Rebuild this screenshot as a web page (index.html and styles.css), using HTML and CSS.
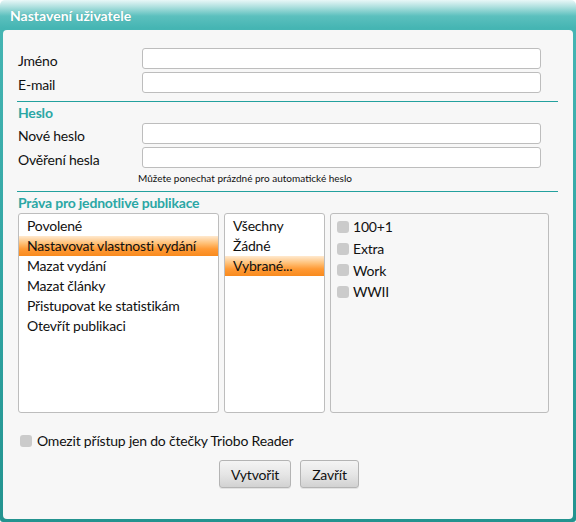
FILE: index.html
```html
<!DOCTYPE html>
<html lang="cs">
<head>
<meta charset="utf-8">
<title>Nastavení uživatele</title>
<link rel="stylesheet" href="styles.css">
</head>
<body>
<div class="dialog">
  <div class="titlebar">Nastavení uživatele</div>
  <div class="panel">
    <div class="form-grid">
      <label class="lbl">Jméno</label><div class="input"></div>
      <label class="lbl">E-mail</label><div class="input"></div>
    </div>
    <div class="section">
      <div class="heading">Heslo</div>
    </div>
    <div class="form-grid">
      <label class="lbl">Nové heslo</label><div class="input"></div>
      <label class="lbl">Ověření hesla</label><div class="input"></div>
    </div>
    <div class="hint">Můžete ponechat prázdné pro automatické heslo</div>
    <div class="section">
      <div class="heading">Práva pro jednotlivé publikace</div>
    </div>
    <div class="lists">
      <ul class="list list-perms">
        <li>Povolené</li>
        <li class="sel">Nastavovat vlastnosti vydání</li>
        <li>Mazat vydání</li>
        <li>Mazat články</li>
        <li>Přistupovat ke statistikám</li>
        <li>Otevřít publikaci</li>
      </ul>
      <ul class="list list-scope">
        <li>Všechny</li>
        <li>Žádné</li>
        <li class="sel">Vybrané...</li>
      </ul>
      <ul class="list list-pubs">
        <li><span class="cb"></span>100+1</li>
        <li><span class="cb"></span>Extra</li>
        <li><span class="cb"></span>Work</li>
        <li><span class="cb"></span>WWII</li>
      </ul>
    </div>
    <div class="restrict"><span class="cb"></span>Omezit přístup jen do čtečky Triobo Reader</div>
    <div class="buttons">
      <button class="btn btn-create">Vytvořit</button>
      <button class="btn btn-close">Zavřít</button>
    </div>
  </div>
</div>
</body>
</html>
```
FILE: styles.css
```css
html, body {
  margin: 0;
  padding: 0;
  background: #ffffff;
}
body {
  font-family: Lato, "Open Sans", sans-serif;
  font-size: 14px;
  letter-spacing: -0.2px;
  color: #111;
}
.dialog {
  width: 576px;
  height: 522px;
  box-sizing: border-box;
  background: linear-gradient(to bottom, #e8f7f7 0px, #b6e3e2 6px, #5cc0be 16px, #45b5b3 28px, #2fa3a1 60%, #23938f 100%);
  border-radius: 5px 5px 3px 3px;
  padding: 0 3px 3px 3px;
  display: flex;
  flex-direction: column;
}
.titlebar {
  height: 30px;
  box-sizing: border-box;
  padding: 6px 0 0 7px;
  color: #fff;
  font-weight: bold;
  font-size: 14px;
  line-height: 20px;
  letter-spacing: 0;
  text-shadow: 0 0 1px rgba(0,0,0,0.15);
}
.panel {
  flex: 1;
  background: #f7f7f7;
  border-radius: 4px;
  padding: 18px 0 0 15px;
}
.form-grid {
  display: grid;
  grid-template-columns: 124px 399px;
  grid-auto-rows: 21px;
  row-gap: 3px;
}
.lbl {
  display: block;
  height: 21px;
  line-height: 25px;
}
.input {
  height: 21px;
  box-sizing: border-box;
  background: #fff;
  border: 1px solid #bdbdbd;
  border-radius: 3px;
}
.section {
  margin-top: 8px;
  width: 541px;
  margin-left: -1px;
  border-top: 1px solid #23a19e;
}
.heading {
  color: #2ba7a5;
  font-weight: bold;
  line-height: 21px;
  padding-left: 1px;
}
.hint {
  font-size: 10px;
  line-height: 14px;
  letter-spacing: 0;
  padding-left: 120px;
  margin-top: 3px;
}
.hint + .section {
  margin-top: 6px;
}
.hint + .section .heading {
  line-height: 21px;
}
.lists {
  display: flex;
  gap: 5px;
}
.list {
  list-style: none;
  margin: 0;
  padding: 2px 0 0 0;
  height: 200px;
  box-sizing: border-box;
  border: 1px solid #bdbdbd;
  border-radius: 3px;
  background: #fff;
}
.list li {
  line-height: 20px;
  height: 20px;
  padding-left: 8px;
  white-space: nowrap;
}
.list li.sel {
  background: linear-gradient(to bottom, #ffe9cf 0%, #ffc27a 35%, #ff9a35 65%, #f88a1e 100%);
}
.list-perms { width: 201px; }
.list-scope { width: 101px; }
.list-pubs {
  width: 219px;
  background: #f7f7f7;
  padding-top: 2px;
}
.list-pubs li {
  height: 21.7px;
  line-height: 21px;
  padding-left: 6px;
  display: flex;
  align-items: center;
}
.cb {
  display: inline-block;
  width: 12px;
  height: 12px;
  border-radius: 3px;
  background: #cbcbcb;
  margin-right: 4px;
  flex: none;
}
.restrict {
  display: flex;
  align-items: center;
  margin-top: 18px;
  padding-left: 2px;
  line-height: 20px;
}
.restrict .cb { margin-right: 5px; }
.buttons {
  display: flex;
  gap: 9px;
  padding-left: 201px;
  margin-top: 9px;
}
.btn {
  font-family: Lato, "Open Sans", sans-serif;
  font-size: 14px;
  letter-spacing: -0.2px;
  color: #111;
  height: 28px;
  padding: 0 6px;
  border: 1px solid #b4b4b4;
  border-radius: 3px;
  background: linear-gradient(to bottom, #f4f4f4 0%, #e6e6e6 50%, #d2d2d2 100%);
  box-shadow: 0 1px 0 rgba(0,0,0,0.08);
}
.btn-create { width: 72px; }
.btn-close { width: 59px; }
```
